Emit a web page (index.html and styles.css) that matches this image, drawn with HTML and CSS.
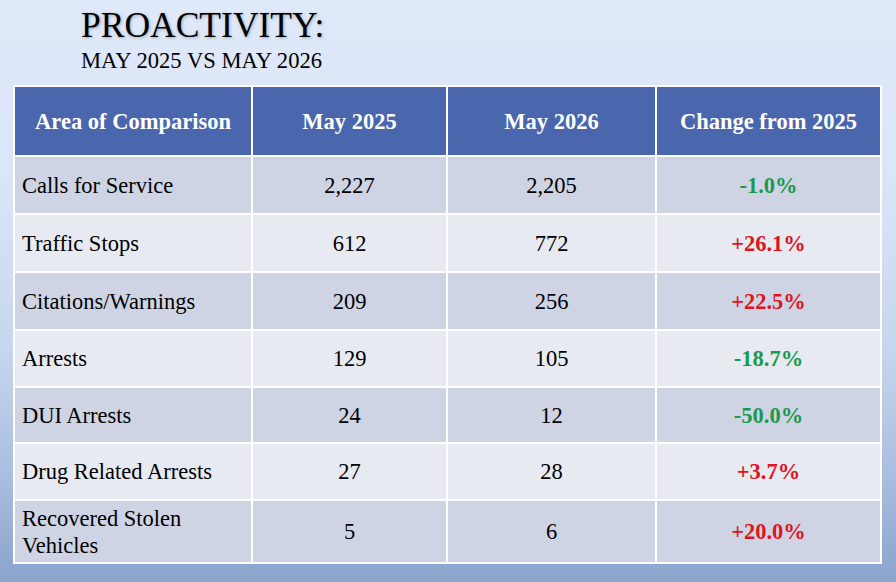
FILE: index.html
```html
<!DOCTYPE html>
<html lang="en">
<head>
<meta charset="utf-8">
<title>Proactivity: May 2025 vs May 2026</title>
<link rel="stylesheet" href="styles.css">
</head>
<body>
<div class="slide">
  <header class="heading">
    <h1 class="title">PROACTIVITY:</h1>
    <h2 class="subtitle">MAY 2025 VS MAY 2026</h2>
  </header>
  <table class="stats">
    <colgroup>
      <col class="c1"><col class="c2"><col class="c3"><col class="c4">
    </colgroup>
    <thead>
      <tr class="head">
        <th>Area of Comparison</th>
        <th>May 2025</th>
        <th>May 2026</th>
        <th>Change from 2025</th>
      </tr>
    </thead>
    <tbody>
      <tr class="odd r58"><td class="label">Calls for Service</td><td>2,227</td><td>2,205</td><td class="down">-1.0%</td></tr>
      <tr class="even r58"><td class="label">Traffic Stops</td><td>612</td><td>772</td><td class="up">+26.1%</td></tr>
      <tr class="odd r58"><td class="label">Citations/Warnings</td><td>209</td><td>256</td><td class="up">+22.5%</td></tr>
      <tr class="even r57"><td class="label">Arrests</td><td>129</td><td>105</td><td class="down">-18.7%</td></tr>
      <tr class="odd r56"><td class="label">DUI Arrests</td><td>24</td><td>12</td><td class="down">-50.0%</td></tr>
      <tr class="even r57"><td class="label">Drug Related Arrests</td><td>27</td><td>28</td><td class="up">+3.7%</td></tr>
      <tr class="odd r63"><td class="label">Recovered Stolen<br>Vehicles</td><td>5</td><td>6</td><td class="up">+20.0%</td></tr>
    </tbody>
  </table>
</div>
</body>
</html>
```

FILE: styles.css
```css
html, body {
  margin: 0;
  padding: 0;
}
body {
  width: 896px;
  height: 582px;
  overflow: hidden;
  font-family: "Liberation Serif", "Times New Roman", serif;
  background: linear-gradient(to bottom, #dfe9fa 0%, #dae5f7 30%, #c7d6ee 60%, #a9bddf 82%, #8aa4cc 100%);
}
.slide {
  padding: 6px 0 0 13px;
}
.heading {
  padding-left: 68px;
}
.title {
  margin: 0;
  font-size: 35.5px;
  line-height: 38px;
  font-weight: normal;
  color: #000;
  text-shadow: 1px 1px 3px rgba(70, 70, 70, 0.4);
}
.subtitle {
  margin: 5px 0 0 0;
  font-size: 22.6px;
  line-height: 24px;
  font-weight: normal;
  color: #000;
}
.stats {
  margin-top: 12px;
  border-collapse: collapse;
  table-layout: fixed;
  width: 867px;
}
.c1 { width: 238px; }
.c2 { width: 195px; }
.c3 { width: 209px; }
.c4 { width: 225px; }
.stats th, .stats td {
  border: 2px solid #ffffff;
  padding: 0 8px;
  text-align: center;
  vertical-align: middle;
  font-size: 22.5px;
  line-height: 27px;
  color: #000;
}
.head {
  height: 70px;
  background: #4a66ac;
}
.stats th {
  color: #ffffff;
  font-weight: bold;
  white-space: nowrap;
}
.odd { background: #cfd4e4; }
.even { background: #e8eaf2; }
.r58 { height: 58px; }
.r57 { height: 57px; }
.r56 { height: 56px; }
.r63 { height: 63px; }
.stats td.label {
  text-align: left;
  padding-left: 7px;
}
.stats td.up {
  color: #e0141e;
  font-weight: bold;
}
.stats td.down {
  color: #1a9a4e;
  font-weight: bold;
}
```
